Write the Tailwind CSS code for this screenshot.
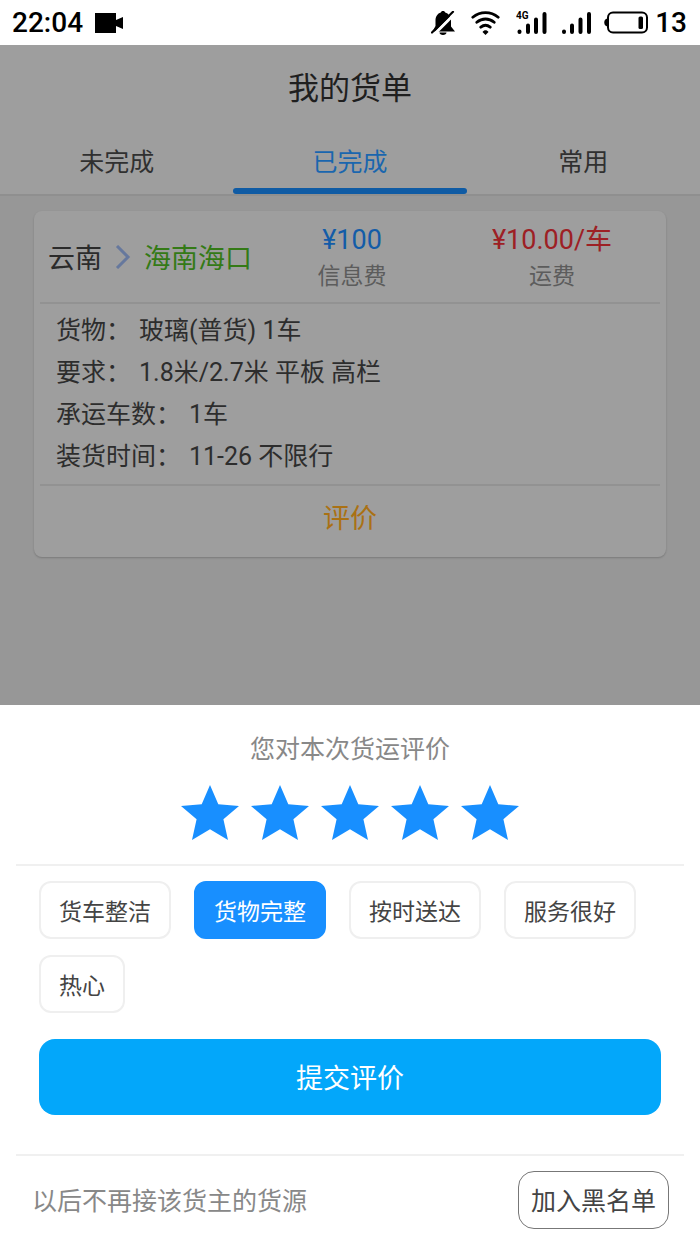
<!DOCTYPE html>
<html lang="zh-CN">
<head>
<meta charset="utf-8">
<meta name="viewport" content="width=device-width, initial-scale=1">
<title>我的货单</title>
<script src="https://cdn.jsdelivr.net/npm/@tailwindcss/browser@4"></script>
</head>
<body class="flex min-h-screen flex-col bg-[#979797] font-['Noto_Sans_CJK_SC',sans-serif] text-[25px] text-[#333]">

  <!-- Status bar -->
  <div class="flex h-[45px] items-center justify-between bg-white pr-[13px] pl-3 font-['Roboto',sans-serif] text-black">
    <div class="flex items-center gap-3">
      <time class="text-[28px] leading-none font-medium">22:04</time>
      <svg class="h-5 w-7" viewBox="0 0 28 20" fill="currentColor" aria-hidden="true"><path d="M0 0h21v7l7-3v12l-7-3v7H0z"/></svg>
    </div>
    <div class="flex items-center">
      <svg class="mr-4 h-6 w-6" viewBox="0 0 24 24" aria-hidden="true">
        <path d="M12 0c1.300 0 2 .6 2.200 1.500C17.500 2.500 20 5.500 20 9.500v6l4 5H1.500L4.500 15V9.500c0-4 2-7 5.300-8C10 .6 10.700 0 12 0zM8.500 21.500h7c0 1.500-1.500 2.500-3.500 2.500s-3.500-1-3.500-2.500z"/>
        <path d="M3 23.500 24 2.500" stroke="#fff" stroke-width="3"/>
        <path d="M1 21.500 22 .8" stroke="#000" stroke-width="2.200" stroke-linecap="round"/>
      </svg>
      <svg class="mr-4 h-6 w-[29px]" viewBox="0 0 29 24" fill="none" stroke="currentColor" stroke-width="2.800" stroke-linecap="round" aria-hidden="true">
        <path d="M1.800 6.200c7.400-6.200 18-6.200 25.400 0M5.800 11.300c5.200-4.400 12.200-4.400 17.400 0M9.800 16.200c3-2.500 6.400-2.500 9.400 0"/>
        <path d="M14.500 24l-3-3c1.500-2.200 4.500-2.200 6 0z" fill="currentColor" stroke="none"/>
      </svg>
      <svg class="mr-3 h-6 w-8" viewBox="0 0 32 24" fill="none" stroke="currentColor" stroke-width="4" stroke-linecap="round" role="img" aria-label="4G">
        <path d="M3.500 20.500v.5M12 14.500V21M20 8.500V21M28.500 3V21"/>
        <text x="0" y="8" fill="currentColor" stroke="none" class="text-[10px] font-bold">4G</text>
      </svg>
      <svg class="mr-3 h-6 w-8" viewBox="0 0 32 24" fill="none" stroke="currentColor" stroke-width="4" stroke-linecap="round" aria-hidden="true">
        <path d="M4 20.500v.5M12 14.500V21M20.500 8.500V21M29 3V21"/>
      </svg>
      <svg class="mr-[7px] h-6 w-11" viewBox="0 0 44 24" aria-hidden="true">
        <rect x="4" y="1.500" width="39" height="20" rx="5" fill="none" stroke="currentColor" stroke-width="2"/>
        <path d="M3.500 7.500C1 8 .3 9.500.3 11.500s.7 3.500 3.200 4z"/>
        <rect x="34.500" y="5.500" width="4.500" height="12.500" rx="1.500"/>
      </svg>
      <span class="text-[28px] leading-none font-medium">13</span>
    </div>
  </div>

  <!-- Title and tabs -->
  <header class="border-b-2 border-[#8f8f8f] bg-[#9e9e9e]">
    <h1 class="flex h-[83px] items-center justify-center text-[31px] text-[#1f1f1f]">我的货单</h1>
    <nav class="grid h-[66px] grid-cols-3 text-center leading-[64px]">
      <a href="#" class="text-[#303030]">未完成</a>
      <a href="#" aria-current="page" class="flex flex-col text-[#1a66ae]">
        <span class="h-[60px]">已完成</span>
        <span class="h-1.5 rounded-full bg-[#0f5ba4]"></span>
      </a>
      <a href="#" class="text-[#303030]">常用</a>
    </nav>
  </header>

  <main class="flex-1 px-[34px] pt-[15px]">
    <article class="rounded-lg bg-[#9e9e9e] px-1.5 shadow-[0_1px_2px_rgba(0,0,0,0.200)]">
      <div class="flex h-[93px] items-center border-b-2 border-[#929292] px-2">
        <div class="flex flex-1 items-center text-[27px] leading-9">
          <span class="text-[#2b2b2b]">云南</span>
          <svg class="mx-3 h-6 w-[18px]" viewBox="0 0 18 24" fill="none" stroke="#66789d" stroke-width="3" aria-hidden="true"><path d="M3 1l11 11L3 23"/></svg>
          <span class="text-[#347a16]">海南海口</span>
        </div>
        <div class="w-[200px] text-center">
          <div class="font-['Roboto','Noto_Sans_CJK_SC',sans-serif] text-[27px] leading-[34px] text-[#135ca8]">¥100</div>
          <div class="text-[23px] leading-[34px] text-[#5c5c5c]">信息费</div>
        </div>
        <div class="w-[200px] text-center">
          <div class="font-['Roboto','Noto_Sans_CJK_SC',sans-serif] text-[27px] leading-[34px] text-[#9d2024]">¥10.00/车</div>
          <div class="text-[23px] leading-[34px] text-[#5c5c5c]">运费</div>
        </div>
      </div>
      <dl class="border-b-2 border-[#929292] px-4 py-1.5 font-['Roboto','Noto_Sans_CJK_SC',sans-serif] leading-[42px] text-[#2d2d2d]">
        <div class="flex gap-2"><dt>货物：</dt><dd>玻璃(普货) 1车</dd></div>
        <div class="flex gap-2"><dt>要求：</dt><dd>1.8米/2.7米 平板 高栏</dd></div>
        <div class="flex gap-2"><dt>承运车数：</dt><dd>1车</dd></div>
        <div class="flex gap-2"><dt>装货时间：</dt><dd>11-26 不限行</dd></div>
      </dl>
      <button type="button" class="block h-[71px] w-full pb-2 text-[27px] text-[#aa7114]">评价</button>
    </article>
  </main>

  <!-- Rating sheet -->
  <section role="dialog" aria-labelledby="rate-title" class="bg-white px-4">
    <h2 id="rate-title" class="pt-6 text-center leading-9 text-[#888]">您对本次货运评价</h2>
    <div class="flex justify-center gap-3 border-b-2 border-[#f0f0f0] pt-5 pb-[23px] text-[#188fff]">
      <button type="button" aria-label="1星"><svg class="h-14 w-[58px]" viewBox="0 0 58 56" fill="currentColor"><path d="M29 0l8.300 19.300 20.700 1.600-15.600 13.300L47 55 29 44.200 11 55l4.600-20.800L0 20.900l20.700-1.600z"/></svg></button>
      <button type="button" aria-label="2星"><svg class="h-14 w-[58px]" viewBox="0 0 58 56" fill="currentColor"><path d="M29 0l8.300 19.300 20.700 1.600-15.600 13.300L47 55 29 44.200 11 55l4.600-20.800L0 20.900l20.700-1.600z"/></svg></button>
      <button type="button" aria-label="3星"><svg class="h-14 w-[58px]" viewBox="0 0 58 56" fill="currentColor"><path d="M29 0l8.300 19.300 20.700 1.600-15.600 13.300L47 55 29 44.200 11 55l4.600-20.800L0 20.900l20.700-1.600z"/></svg></button>
      <button type="button" aria-label="4星"><svg class="h-14 w-[58px]" viewBox="0 0 58 56" fill="currentColor"><path d="M29 0l8.300 19.300 20.700 1.600-15.600 13.300L47 55 29 44.200 11 55l4.600-20.800L0 20.900l20.700-1.600z"/></svg></button>
      <button type="button" aria-label="5星"><svg class="h-14 w-[58px]" viewBox="0 0 58 56" fill="currentColor"><path d="M29 0l8.300 19.300 20.700 1.600-15.600 13.300L47 55 29 44.200 11 55l4.600-20.800L0 20.900l20.700-1.600z"/></svg></button>
    </div>

    <div class="border-b-2 border-[#f0f0f0] px-[23px] pt-[15px] pb-[39px]">
      <div class="flex flex-wrap gap-x-[23px] gap-y-4 text-[23px] text-[#444]">
        <button type="button" aria-pressed="false" class="h-[58px] rounded-xl border-2 border-[#efefef] px-[18px]">货车整洁</button>
        <button type="button" aria-pressed="true" class="h-[58px] rounded-xl border-2 border-[#188fff] bg-[#188fff] px-[18px] text-white">货物完整</button>
        <button type="button" aria-pressed="false" class="h-[58px] rounded-xl border-2 border-[#efefef] px-[18px]">按时送达</button>
        <button type="button" aria-pressed="false" class="h-[58px] rounded-xl border-2 border-[#efefef] px-[18px]">服务很好</button>
        <button type="button" aria-pressed="false" class="h-[58px] rounded-xl border-2 border-[#efefef] px-[18px]">热心</button>
      </div>
      <button type="button" class="mt-[26px] block h-[76px] w-full rounded-2xl bg-[#03a7fa] text-[27px] text-white">提交评价</button>
    </div>

    <div class="flex items-center justify-between py-[15px] pr-[15px] pl-4">
      <span class="text-[#888]">以后不再接该货主的货源</span>
      <button type="button" class="h-[58px] rounded-2xl border border-[#777] px-3 text-[#444]">加入黑名单</button>
    </div>
  </section>
</body>
</html>
